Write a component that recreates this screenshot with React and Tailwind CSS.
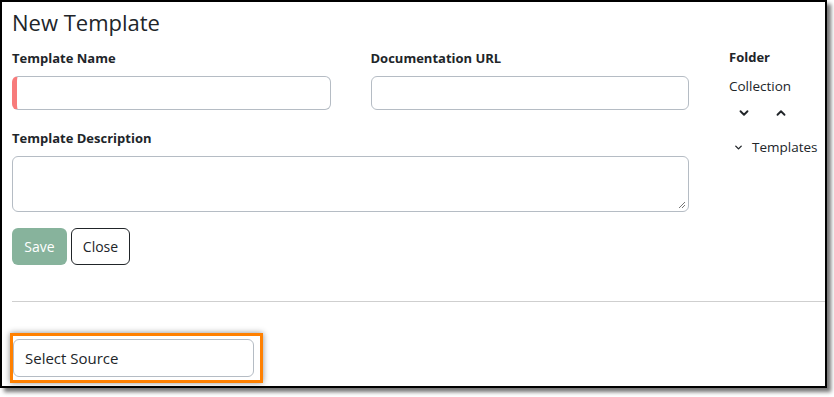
import { ChevronDown, ChevronUp } from 'lucide-react';

const font = { fontFamily: '"Open Sans", "Noto Sans", sans-serif' };

function Label({ children }) {
  return <div className="text-[13px] font-bold text-[#212529] leading-5 h-5">{children}</div>;
}

export default function App() {
  return (
    <div className="w-[834px] h-[397px] bg-white" style={font}>
      <div className="w-[827px] h-[388px] border-2 border-black bg-white shadow-[4px_4px_4px_rgba(0,0,0,0.55)] flex flex-col">
        <div className="flex pl-[10px] pt-[6px]">
          {/* Form */}
          <div className="w-[677px]">
            <h1 className="text-[22px] leading-7 text-[#212529] font-normal">New Template</h1>
            <div className="grid grid-cols-2 gap-x-[40px] mt-[12px]">
              <div>
                <Label>Template Name</Label>
                <div className="mt-[8px] h-[34px] rounded-md border border-[#b5bcc4] border-l-[5px] border-l-[#f77b7b]" />
              </div>
              <div>
                <Label>Documentation URL</Label>
                <div className="mt-[8px] h-[34px] rounded-md border border-[#b5bcc4]" />
              </div>
            </div>
            <div className="mt-[18px]">
              <Label>Template Description</Label>
              <div className="relative mt-[8px] h-[56px] rounded-md border border-[#b5bcc4]">
                <svg className="absolute right-[2px] bottom-[2px]" width="8" height="8" viewBox="0 0 8 8">
                  <path d="M7 1L1 7M7 4L4 7" stroke="#777" strokeWidth="1" />
                </svg>
              </div>
            </div>
            <div className="flex gap-[4px] mt-[16px]">
              <button className="h-[37px] w-[55px] rounded-md bg-[#87b39c] text-white text-[14px]">Save</button>
              <button className="h-[37px] w-[59px] rounded-md border border-[#212529] text-[#212529] text-[14px]">Close</button>
            </div>
          </div>
          {/* Folder */}
          <div className="ml-[40px] pt-[39px] text-[#212529]">
            <Label>Folder</Label>
            <div className="mt-[9px] text-[13.5px] leading-5">Collection</div>
            <div className="flex items-center gap-[23px] mt-[7px] pl-[8px] h-5">
              <ChevronDown size={14} strokeWidth={3.2} />
              <ChevronUp size={14} strokeWidth={3.2} />
            </div>
            <div className="flex items-center gap-[8px] mt-[14px] pl-[4px] text-[13.5px] leading-5">
              <ChevronDown size={11} strokeWidth={3} />
              <span>Templates</span>
            </div>
          </div>
        </div>
        <div className="mt-[36px] ml-[10px] border-t border-[#cfcfcf]" />
        <div className="mt-[31px] ml-[8px] w-[253px] border-[3px] border-[#ff8000] pr-[6px] py-[3px] shadow-[0_0_6px_rgba(0,0,0,0.45)]">
          <div className="h-[38px] rounded-md border border-[#b5bcc4] flex items-center pl-[11px] text-[15px] text-[#212529]">
            Select Source
          </div>
        </div>
      </div>
    </div>
  );
}
